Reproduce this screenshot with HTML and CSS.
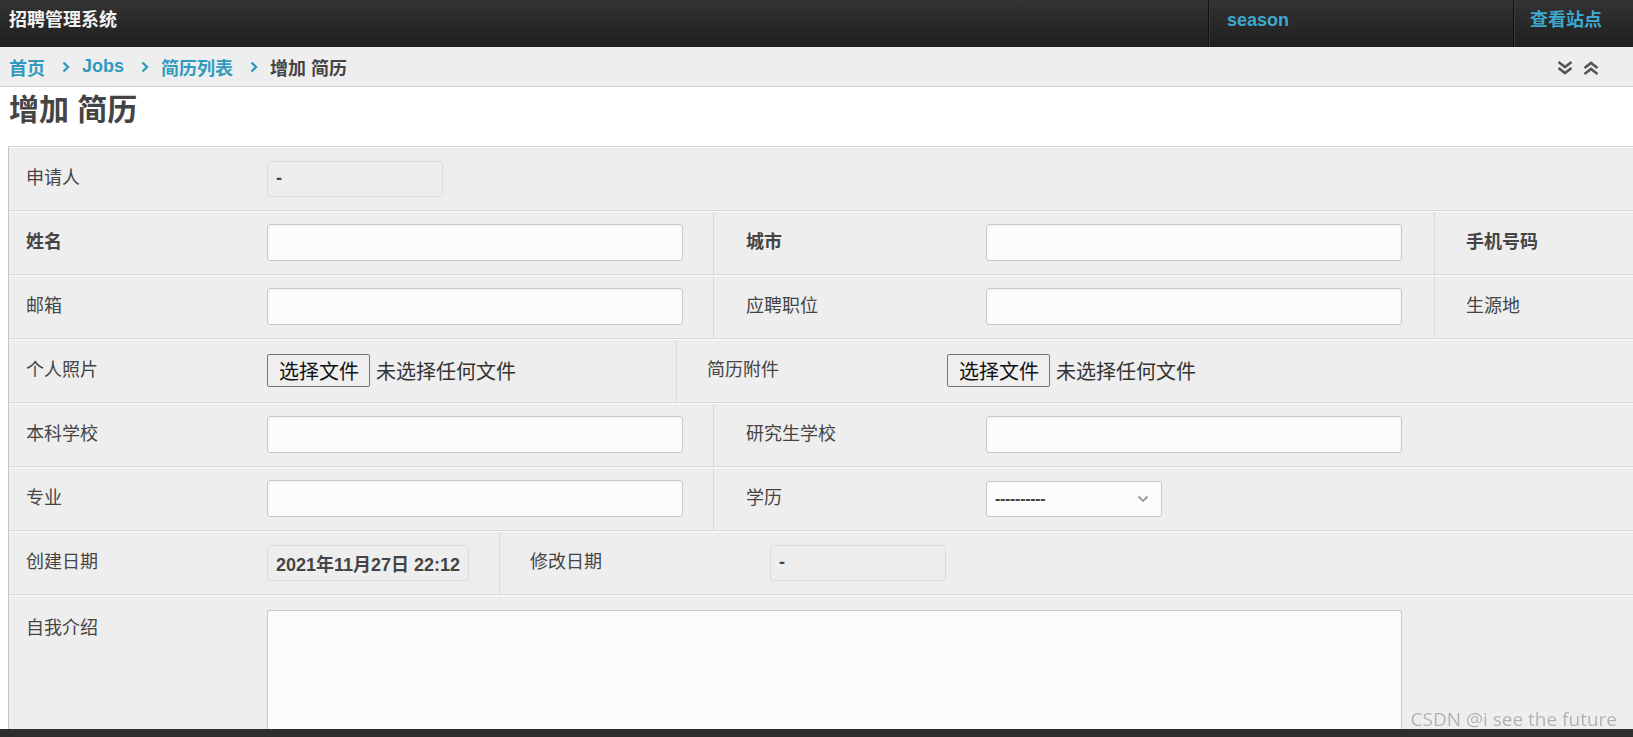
FILE: index.html
```html
<!DOCTYPE html>
<html lang="zh-CN">
<head>
<meta charset="utf-8">
<title>增加 简历</title>
<link rel="stylesheet" href="styles.css">
</head>
<body>
<header class="topbar">
  <div class="brand">招聘管理系统</div>
  <nav class="user-nav">
    <a class="nav-item nav-user" href="#">season</a>
    <a class="nav-item nav-site" href="#">查看站点</a>
  </nav>
</header>

<div class="breadcrumbs">
  <div class="crumbs">
    <a href="#">首页</a>
    <span class="sep"><svg width="8" height="12" viewBox="0 0 8 12"><polyline points="1.5,1.5 6,6 1.5,10.5" fill="none" stroke="#309bbf" stroke-width="2.4"/></svg></span>
    <a href="#">Jobs</a>
    <span class="sep"><svg width="8" height="12" viewBox="0 0 8 12"><polyline points="1.5,1.5 6,6 1.5,10.5" fill="none" stroke="#309bbf" stroke-width="2.4"/></svg></span>
    <a href="#">简历列表</a>
    <span class="sep"><svg width="8" height="12" viewBox="0 0 8 12"><polyline points="1.5,1.5 6,6 1.5,10.5" fill="none" stroke="#309bbf" stroke-width="2.4"/></svg></span>
    <span class="current">增加 简历</span>
  </div>
  <div class="tools">
    <svg width="18" height="16" viewBox="0 0 18 16"><polyline points="2.5,2 9,7 15.5,2" fill="none" stroke="#555" stroke-width="2.6"/><polyline points="2.5,8 9,13 15.5,8" fill="none" stroke="#555" stroke-width="2.6"/></svg>
    <svg width="18" height="16" viewBox="0 0 18 16"><polyline points="2.5,8 9,3 15.5,8" fill="none" stroke="#555" stroke-width="2.6"/><polyline points="2.5,14 9,9 15.5,14" fill="none" stroke="#555" stroke-width="2.6"/></svg>
  </div>
</div>

<div class="title-bar"><h1>增加 简历</h1></div>

<div class="form-box">
  <div class="row">
    <div class="cell first">
      <div class="label">申请人</div>
      <div class="readonly">-</div>
    </div>
  </div>

  <div class="row">
    <div class="cell first w704">
      <div class="label required">姓名</div>
      <input class="text" type="text">
    </div>
    <div class="cell second w721">
      <div class="label required">城市</div>
      <input class="text" type="text">
    </div>
    <div class="cell third">
      <div class="label required">手机号码</div>
    </div>
  </div>

  <div class="row">
    <div class="cell first w704">
      <div class="label">邮箱</div>
      <input class="text" type="text">
    </div>
    <div class="cell second w721">
      <div class="label">应聘职位</div>
      <input class="text" type="text">
    </div>
    <div class="cell third">
      <div class="label">生源地</div>
    </div>
  </div>

  <div class="row">
    <div class="cell first w667">
      <div class="label">个人照片</div>
      <div class="file">
        <span class="file-btn">选择文件</span>
        <span class="file-name">未选择任何文件</span>
      </div>
    </div>
    <div class="cell second narrow">
      <div class="label">简历附件</div>
      <div class="file">
        <span class="file-btn">选择文件</span>
        <span class="file-name">未选择任何文件</span>
      </div>
    </div>
  </div>

  <div class="row">
    <div class="cell first w704">
      <div class="label">本科学校</div>
      <input class="text" type="text">
    </div>
    <div class="cell second grow">
      <div class="label">研究生学校</div>
      <input class="text" type="text">
    </div>
  </div>

  <div class="row">
    <div class="cell first w704">
      <div class="label">专业</div>
      <input class="text" type="text">
    </div>
    <div class="cell second grow">
      <div class="label">学历</div>
      <div class="select">
        <span class="select-value">----------</span>
        <svg class="select-arrow" width="12" height="8" viewBox="0 0 12 8"><polyline points="1.5,1.5 6,6 10.5,1.5" fill="none" stroke="#999" stroke-width="1.8"/></svg>
      </div>
    </div>
  </div>

  <div class="row">
    <div class="cell first w490">
      <div class="label">创建日期</div>
      <div class="readonly">2021年11月27日 22:12</div>
    </div>
    <div class="cell second narrow">
      <div class="label">修改日期</div>
      <div class="readonly">-</div>
    </div>
  </div>

  <div class="row last">
    <div class="cell first top">
      <div class="label">自我介绍</div>
      <textarea class="area"></textarea>
    </div>
  </div>
</div>

<div class="footer-bar"></div>
<div class="watermark">CSDN @i see the future</div>
</body>
</html>
```

FILE: styles.css
```css
html, body {
  margin: 0;
  padding: 0;
  height: 100%;
  overflow: hidden;
  background: #fff;
}

body {
  font-family: "Liberation Sans", Arial, "Noto Sans CJK SC", sans-serif;
  color: #444;
}

a {
  text-decoration: none;
}

/* ---------- top bar ---------- */
.topbar {
  height: 47px;
  display: flex;
  background: linear-gradient(#333333, #1f1f1f);
}

.brand {
  flex: 1;
  padding: 0 9px;
  color: #f2f2f2;
  font-weight: bold;
  font-size: 18px;
  line-height: 40px;
}

.user-nav {
  display: flex;
}

.nav-item {
  display: block;
  height: 47px;
  box-sizing: border-box;
  border-left: 1px solid #111;
  box-shadow: inset 1px 0 0 #3a3a3a;
  color: #3ea8cf;
  font-weight: bold;
  font-size: 18px;
  line-height: 40px;
}

.nav-user {
  width: 305px;
  padding-left: 18px;
}

.nav-site {
  width: 120px;
  padding-left: 16px;
}

/* ---------- breadcrumbs ---------- */
.breadcrumbs {
  height: 40px;
  box-sizing: border-box;
  border-bottom: 1px solid #cfcfcf;
  background: #eeeeee;
  display: flex;
  align-items: center;
  justify-content: space-between;
  padding: 0 33px 0 9px;
}

.crumbs {
  display: flex;
  align-items: center;
  font-size: 18px;
  font-weight: bold;
}

.crumbs a {
  color: #309bbf;
}

.sep {
  display: inline-flex;
  margin: 0 12px 0 17px;
}

.current {
  color: #444;
}

.tools {
  display: flex;
  gap: 8px;
  padding-top: 2px;
}

/* ---------- title ---------- */
.title-bar {
  height: 59px;
  box-sizing: border-box;
  padding: 5px 9px 0;
}

.title-bar h1 {
  margin: 0;
  font-size: 30px;
  line-height: 36px;
  font-weight: bold;
  color: #444;
}

/* ---------- form ---------- */
.form-box {
  margin-left: 8px;
  border-left: 1px solid #c4c4c4;
  border-top: 1px solid #d4d4d4;
  background: #eeeeee;
}

.row {
  display: flex;
  border-top: 1px solid #fafafa;
  border-bottom: 1px solid #d9d9d9;
}

.row.last {
  border-bottom: 0;
}

.cell {
  display: flex;
  align-items: center;
  box-sizing: border-box;
  padding: 12px 0 13px;
  min-height: 62px;
  flex: none;
}

.cell.first {
  padding-left: 17px;
}

.cell.second {
  border-left: 1px solid #dadada;
  padding-left: 32px;
}

.cell.second.narrow {
  padding-left: 30px;
  flex: 1 1 auto;
}

.cell.second.grow {
  flex: 1 1 auto;
}

.cell.third {
  border-left: 1px solid #dadada;
  padding-left: 31px;
  flex: 1 1 0;
  min-width: 0;
}

.w704 { width: 704px; }
.w721 { width: 721px; }
.w667 { width: 667px; }
.w490 { width: 490px; }

.cell.top {
  align-items: flex-start;
  padding-top: 14px;
  padding-bottom: 0;
}

.label {
  width: 241px;
  flex: none;
  font-size: 18px;
  line-height: 37px;
  color: #444;
  white-space: nowrap;
}

.second .label,
.third .label {
  width: 240px;
}

.label.required {
  font-weight: bold;
}

.text {
  width: 416px;
  height: 37px;
  box-sizing: border-box;
  margin: 0;
  border: 1px solid #c8c8c8;
  border-radius: 3px;
  background: #fcfcfc;
  box-shadow: inset 0 1px 3px rgba(0, 0, 0, 0.04);
  font-size: 18px;
  outline: none;
  flex: none;
}

.readonly {
  min-width: 176px;
  height: 36px;
  box-sizing: border-box;
  padding: 0 8px;
  border: 1px solid #dcdcdc;
  border-radius: 3px;
  display: inline-flex;
  align-items: center;
  font-size: 18px;
  font-weight: bold;
  color: #444;
  white-space: nowrap;
}

.file {
  display: flex;
  align-items: center;
  gap: 6px;
  font-family: "Noto Sans CJK SC", sans-serif;
  font-size: 20px;
}

.file-btn {
  display: inline-block;
  height: 33px;
  box-sizing: border-box;
  padding: 0 10px 0 11px;
  border: 1px solid #767676;
  border-radius: 2px;
  background: #efefef;
  color: #111;
  line-height: 31px;
}

.file-name {
  color: #333;
}

.select {
  width: 176px;
  height: 36px;
  box-sizing: border-box;
  border: 1px solid #c8c8c8;
  border-radius: 3px;
  background: #fcfcfc;
  display: flex;
  align-items: center;
  justify-content: space-between;
  padding: 0 12px 0 8px;
}

.select-value {
  font-size: 16px;
  font-weight: bold;
  color: #444;
  letter-spacing: -0.3px;
}

.area {
  display: block;
  width: 1135px;
  height: 126px;
  box-sizing: border-box;
  margin: 0;
  border: 1px solid #c8c8c8;
  border-bottom: 0;
  border-radius: 3px 3px 0 0;
  background: #fcfcfc;
  resize: none;
  outline: none;
}

/* ---------- overlays ---------- */
.footer-bar {
  position: fixed;
  left: 0;
  right: 0;
  bottom: 0;
  height: 8px;
  background: #2e2e2e;
}

.watermark {
  position: fixed;
  right: 16px;
  bottom: 7px;
  font-family: "Open Sans", "Noto Sans", sans-serif;
  font-size: 19px;
  line-height: 22px;
  color: #b0b0b0;
  text-shadow: 0 0 1px #fff;
}
```
